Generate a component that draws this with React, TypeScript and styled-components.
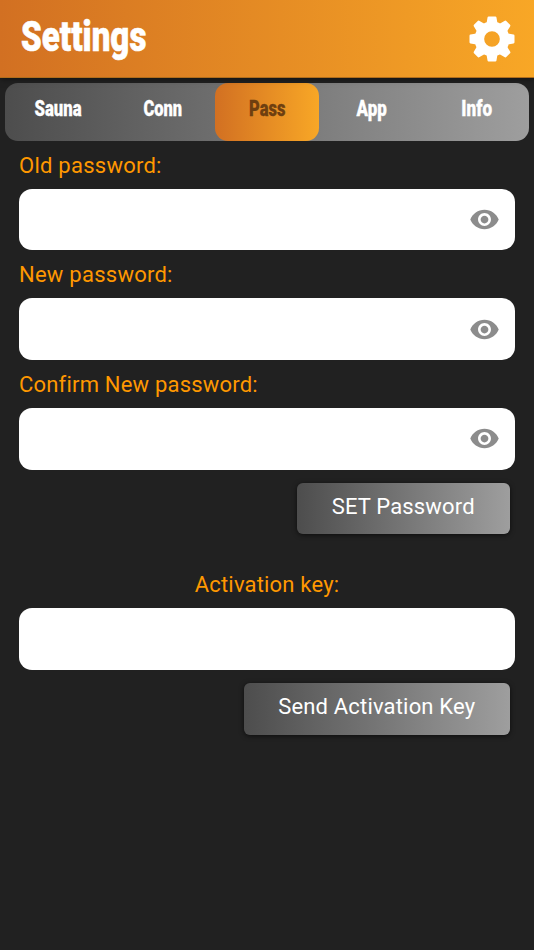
import React from "react";
import styled, { createGlobalStyle } from "styled-components";
import { MdVisibility } from "react-icons/md";

const GlobalStyle = createGlobalStyle`
  * { box-sizing: border-box; }
  body { margin: 0; background: #212121; font-family: Roboto, "Liberation Sans", sans-serif; }
  button, input { font: inherit; border: 0; }
`;

const Screen = styled.main`
  min-height: 950px;
  background: #212121;
`;

const Header = styled.header`
  position: relative;
  display: flex;
  align-items: center;
  justify-content: space-between;
  height: 78px;
  padding: 0 19px 0 21px;
  background: linear-gradient(90deg, #d27022, #f8a726);
  border-bottom: 1px solid #b06d1c;
  box-shadow: 0 1px 6px rgba(0, 0, 0, 0.5);
`;

const Title = styled.h1<{ $squeeze: number }>`
  margin: 0;
  padding-bottom: 6px;
  color: #fff;
  font-size: 43px;
  line-height: 50px;
  font-weight: 900;
  white-space: nowrap;
  -webkit-text-stroke: 0.6px #fff;
  transform: scaleX(${(p) => p.$squeeze});
  transform-origin: left;
`;

const GearButton = styled.button`
  display: flex;
  padding: 0;
  background: none;
  color: #fff;
`;

const Tabs = styled.nav`
  display: grid;
  grid-template-columns: repeat(5, 1fr);
  height: 57.8px;
  margin: 5px 5.4px 0;
  border-radius: 13px;
  background: linear-gradient(90deg, #4d4d4d, #9e9e9e);
`;

const Tab = styled.button<{ $active?: boolean }>`
  display: flex;
  justify-content: center;
  padding: 13px 0 0;
  border-radius: 13px;
  color: ${(p) => (p.$active ? "#6e3f10" : "#fff")};
  background: ${(p) => (p.$active ? "linear-gradient(90deg, #d27022, #f8a726)" : "none")};
  font-size: 22px;
  line-height: 26px;
  font-weight: 900;
`;

const TabText = styled.span<{ $squeeze: number }>`
  -webkit-text-stroke: 0.3px currentColor;
  transform: scaleX(${(p) => p.$squeeze});
`;

const Form = styled.form`
  display: flex;
  flex-direction: column;
  padding: 0 19px;
`;

const Label = styled.label<{ $center?: boolean; $tracking: number }>`
  height: 48px;
  padding-top: 12px;
  color: #ff9800;
  font-size: 22px;
  line-height: 26px;
  letter-spacing: ${(p) => p.$tracking}px;
  text-align: ${(p) => (p.$center ? "center" : "left")};
  white-space: nowrap;
`;

const Field = styled.div`
  display: flex;
  align-items: center;
  height: 61.6px;
  padding-right: 15.5px;
  border-radius: 13px;
  background: #fff;
  color: #8c8c8c;
`;

const Input = styled.input`
  flex: 1;
  min-width: 0;
  height: 100%;
  padding: 0 16px;
  border-radius: 13px;
  background: transparent;
  outline: none;
  font-size: 22px;
`;

const Action = styled.button<{ $width: number; $tracking: number }>`
  align-self: flex-end;
  width: ${(p) => p.$width}px;
  height: 51.5px;
  margin: 13.4px 5px 0 0;
  padding: 0 0 3.5px;
  border-radius: 6px;
  background: linear-gradient(90deg, #4d4d4d, #9e9e9e);
  box-shadow: 0 1px 5px rgba(0, 0, 0, 0.6);
  color: #fff;
  font-size: 22px;
  line-height: 26px;
  letter-spacing: ${(p) => p.$tracking}px;
  white-space: nowrap;
`;

const Spacer = styled.div`
  height: 25.6px;
`;

const toothAngles = [0, 45, 90, 135, 180, 225, 270, 315];

const GearIcon = () => (
  <svg width="46" height="46" viewBox="-69 -69 138 138" fill="currentColor" stroke="currentColor" strokeLinejoin="round">
    <circle r="38" fill="none" strokeWidth="29" />
    {toothAngles.map((a) => (
      <path
        key={a}
        transform={`rotate(${a})`}
        strokeWidth="7"
        d={a % 90 ? "M-13 -46L-8 -65H8L13 -46Z" : "M-13 -46L-10 -64H10L13 -46Z"}
      />
    ))}
  </svg>
);

const tabs = [
  { name: "Sauna", squeeze: 0.76 },
  { name: "Conn", squeeze: 0.75 },
  { name: "Pass", squeeze: 0.75 },
  { name: "App", squeeze: 0.77 },
  { name: "Info", squeeze: 0.78 },
];

const passwords = [
  { id: "old", label: "Old password:", tracking: 0.25 },
  { id: "new", label: "New password:", tracking: 0.25 },
  { id: "confirm", label: "Confirm New password:", tracking: 0.2 },
];

export default function App() {
  return (
    <Screen>
      <GlobalStyle />
      <Header>
        <Title $squeeze={0.77}>Settings</Title>
        <GearButton aria-label="Settings menu">
          <GearIcon />
        </GearButton>
      </Header>
      <Tabs>
        {tabs.map((t) => (
          <Tab key={t.name} type="button" $active={t.name === "Pass"}>
            <TabText $squeeze={t.squeeze}>{t.name}</TabText>
          </Tab>
        ))}
      </Tabs>
      <Form>
        {passwords.map((p) => (
          <React.Fragment key={p.id}>
            <Label htmlFor={p.id} $tracking={p.tracking}>{p.label}</Label>
            <Field>
              <Input id={p.id} type="password" />
              <MdVisibility size={31} />
            </Field>
          </React.Fragment>
        ))}
        <Action type="button" $width={213.5} $tracking={0.15}>SET Password</Action>
        <Spacer />
        <Label htmlFor="key" $center $tracking={0.18}>Activation key:</Label>
        <Field>
          <Input id="key" type="text" />
        </Field>
        <Action type="button" $width={266.5} $tracking={0.18}>Send Activation Key</Action>
      </Form>
    </Screen>
  );
}
